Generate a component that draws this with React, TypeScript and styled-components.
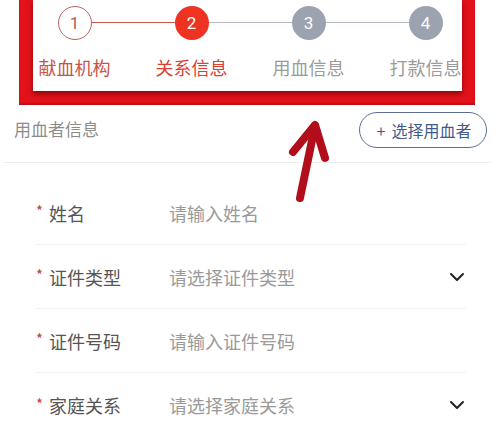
import React from "react";
import styled, { createGlobalStyle } from "styled-components";

const Global = createGlobalStyle`
  html, body { margin: 0; padding: 0; background: #fff; }
  body { font-family: "Noto Sans CJK SC", "Noto Sans", sans-serif; }
  * { box-sizing: border-box; }
`;

const Page = styled.div`
  position: relative;
  width: 500px;
  height: 427px;
  overflow: hidden;
  background: #fff;
`;

const Frame = styled.div`
  margin: 0 25px 0 19px;
  background: #e3121a;
  padding: 0 13px 14px 14px;
  box-shadow: inset 0 -2px 2px rgba(120, 0, 0, 0.35);
`;

const Card = styled.div`
  background: #fff;
  overflow: hidden;
  padding: 6px 0 14px;
  box-shadow: 0 3px 5px rgba(90, 0, 0, 0.65);
`;

const Steps = styled.div`
  display: grid;
  grid-template-columns: repeat(4, 117px);
  margin-left: -17px;
`;

type StepState = "done" | "active" | "todo";

const Step = styled.div<{ $line?: "red" | "grey" }>`
  position: relative;
  display: flex;
  flex-direction: column;
  align-items: center;
  &::before {
    content: "";
    display: ${(p) => (p.$line ? "block" : "none")};
    position: absolute;
    top: 16px;
    left: -50%;
    right: 50%;
    height: 1px;
    background: ${(p) => (p.$line === "red" ? "#c9574f" : "#b9bcc4")};
  }
`;

const Circle = styled.div<{ $state: StepState }>`
  position: relative;
  z-index: 1;
  width: 34px;
  height: 34px;
  border-radius: 50%;
  display: flex;
  align-items: center;
  justify-content: center;
  font-family: Roboto, "Noto Sans", sans-serif;
  font-size: 17px;
  background: ${(p) =>
    p.$state === "done" ? "#fff" : p.$state === "active" ? "#ee3323" : "#9da2b0"};
  color: ${(p) => (p.$state === "done" ? "#b85a55" : "#fff")};
  border: ${(p) => (p.$state === "done" ? "1.5px solid #b86460" : "none")};
`;

const StepLabel = styled.div<{ $state: StepState }>`
  margin-top: 17px;
  font-size: 18px;
  line-height: 20px;
  white-space: nowrap;
  color: ${(p) =>
    p.$state === "done" ? "#c8524b" : p.$state === "active" ? "#dc4034" : "#9b9b9b"};
`;

const Header = styled.div`
  display: flex;
  align-items: center;
  justify-content: space-between;
  padding: 7px 5px 14px 11px;
  margin: 0 8px 0 3px;
  border-bottom: 1px solid #efefef;
`;

const HeaderTitle = styled.div`
  font-size: 17px;
  line-height: 22px;
  color: #8c8c8c;
  margin-top: -2px;
`;

const PickButton = styled.button`
  height: 36px;
  width: 128px;
  border-radius: 18px;
  border: 1.5px solid #5a6e96;
  background: #fff;
  color: #3f5a8c;
  font-family: "Noto Sans CJK SC", sans-serif;
  font-size: 16px;
  padding: 0 0 0 2px;
  display: flex;
  align-items: center;
  justify-content: center;
  gap: 6px;
`;

const Form = styled.div`
  padding-top: 18px;
  margin: 0 34px 0 36px;
`;

const Row = styled.div<{ $last?: boolean }>`
  display: flex;
  align-items: center;
  height: 64px;
  border-bottom: ${(p) => (p.$last ? "none" : "1px solid #f3f3f3")};
`;

const Label = styled.div`
  width: 133px;
  display: flex;
  align-items: center;
  font-size: 18px;
  color: #555;
`;

const Star = styled.span`
  width: 13px;
  color: #c8403a;
  font-size: 15px;
  margin-top: -4px;
`;

const Placeholder = styled.div`
  flex: 1;
  font-size: 18px;
  color: #9a9a9a;
`;

const Chevron = styled.svg`
  width: 16px;
  height: 10px;
  margin-right: 1px;
`;

const ArrowSvg = styled.svg`
  position: absolute;
  left: 280px;
  top: 112px;
  width: 60px;
  height: 100px;
  pointer-events: none;
`;

const steps: { n: number; label: string; state: StepState; line?: "red" | "grey" }[] = [
  { n: 1, label: "献血机构", state: "done" },
  { n: 2, label: "关系信息", state: "active", line: "red" },
  { n: 3, label: "用血信息", state: "todo", line: "grey" },
  { n: 4, label: "打款信息", state: "todo", line: "grey" },
];

const fields: { label: string; placeholder: string; select?: boolean }[] = [
  { label: "姓名", placeholder: "请输入姓名" },
  { label: "证件类型", placeholder: "请选择证件类型", select: true },
  { label: "证件号码", placeholder: "请输入证件号码" },
  { label: "家庭关系", placeholder: "请选择家庭关系", select: true },
];

export default function App() {
  return (
    <Page>
      <Global />
      <Frame>
        <Card>
          <Steps>
            {steps.map((s) => (
              <Step key={s.n} $line={s.line}>
                <Circle $state={s.state}>{s.n}</Circle>
                <StepLabel $state={s.state}>{s.label}</StepLabel>
              </Step>
            ))}
          </Steps>
        </Card>
      </Frame>
      <Header>
        <HeaderTitle>用血者信息</HeaderTitle>
        <PickButton>
          <span>+</span>
          <span>选择用血者</span>
        </PickButton>
      </Header>
      <Form>
        {fields.map((f, i) => (
          <Row key={f.label} $last={i === fields.length - 1}>
            <Label>
              <Star>*</Star>
              {f.label}
            </Label>
            <Placeholder>{f.placeholder}</Placeholder>
            {f.select && (
              <Chevron viewBox="0 0 16 10">
                <path d="M2 2 L8 8 L14 2" fill="none" stroke="#222" strokeWidth="2" strokeLinecap="round" strokeLinejoin="round" />
              </Chevron>
            )}
          </Row>
        ))}
      </Form>
      <ArrowSvg viewBox="0 0 60 100">
        <g fill="none" stroke="#b20d1a" strokeWidth="8" strokeLinecap="round" strokeLinejoin="round">
          <path d="M20 86 L35 14" />
          <path d="M13 40 L35 13 L45 46" />
        </g>
      </ArrowSvg>
    </Page>
  );
}
